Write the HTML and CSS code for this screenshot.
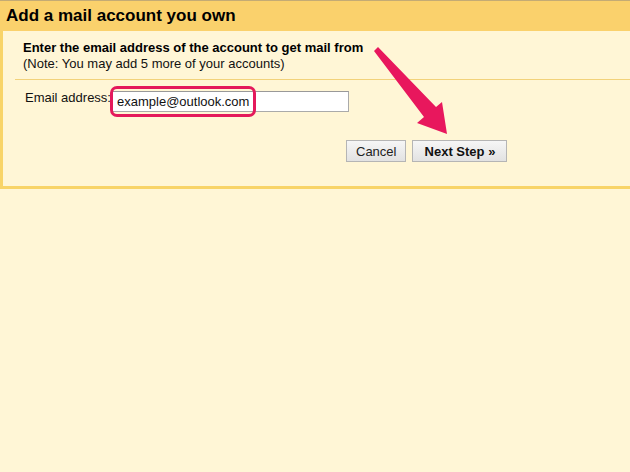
FILE: index.html
```html
<!DOCTYPE html>
<html lang="en">
<head>
    <meta charset="UTF-8">
    <meta name="viewport" content="width=device-width, initial-scale=1.0">
    <title>Add a mail account you own</title>
    <link rel="stylesheet" href="styles.css">
</head>
<body>
    <div class="dialog">
        <div class="dialog-header">Add a mail account you own</div>
        <div class="dialog-body">
            <div class="intro">
                <p class="intro-title">Enter the email address of the account to get mail from</p>
                <p>(Note: You may add 5 more of your accounts)</p>
            </div>
            <div class="form">
                <div class="form-row">
                    <label for="email">Email address:</label>
                    <div class="field">
                        <input id="email" type="text" value="example@outlook.com">
                        <span class="highlight"></span>
                    </div>
                </div>
                <div class="actions">
                    <button class="btn">Cancel</button>
                    <button class="btn btn-next">Next Step &raquo;</button>
                </div>
            </div>
        </div>
    </div>

    <svg class="arrow" width="630" height="472" viewBox="0 0 630 472">
        <polygon points="374,51 378,47 436,107 442,102 447,134 417,123 424,117" fill="#e8175d"/>
    </svg>
</body>
</html>
```

FILE: styles.css
```css
* {
    box-sizing: border-box;
    margin: 0;
    padding: 0;
}

body {
    background: #fff6d6;
    font-family: "Liberation Sans", Arial, sans-serif;
    font-size: 13px;
    color: #111;
    position: relative;
    min-height: 100vh;
}

.dialog-header {
    height: 31px;
    padding: 4px 6px 0;
    border-top: 1px solid #c4ab74;
    background: #fad16c;
    font-size: 17px;
    font-weight: bold;
    line-height: 22px;
    color: #000;
}

.dialog-body {
    border-left: 3px solid #f8d468;
    border-bottom: 3px solid #f8d468;
    background: #fff6d6;
}

.intro {
    padding: 9px 0 7px 20px;
    line-height: 16px;
}

.intro-title {
    font-weight: bold;
    color: #000;
}

.form {
    margin-left: 12px;
    border-top: 1px solid #f2d27a;
    padding: 9px 0 24px 10px;
}

.form-row {
    display: flex;
    align-items: flex-start;
}

.form-row label {
    width: 87px;
    padding-top: 1px;
    line-height: 16px;
}

.field {
    position: relative;
    padding-top: 2px;
}

.field input {
    width: 237px;
    height: 21px;
    border: 1px solid #aaa;
    border-top-color: #999;
    padding: 0 4px;
    font-family: "Liberation Sans", Arial, sans-serif;
    font-size: 13px;
    color: #111;
    background: #fff;
}

.highlight {
    position: absolute;
    left: -2px;
    top: -3px;
    width: 146px;
    height: 31px;
    border: 3px solid #e4195b;
    border-radius: 7px;
}

.actions {
    display: flex;
    gap: 6px;
    padding-left: 321px;
    margin-top: 28px;
}

.btn {
    height: 22px;
    padding: 0 9px;
    border: 1px solid #b5b5b5;
    background: linear-gradient(#f6f6f6, #e2e2e2);
    font-family: "Liberation Sans", Arial, sans-serif;
    font-size: 13px;
    color: #222;
}

.btn-next {
    width: 95px;
    font-weight: bold;
    color: #111;
}

.arrow {
    position: absolute;
    left: 0;
    top: 0;
    pointer-events: none;
}
```
